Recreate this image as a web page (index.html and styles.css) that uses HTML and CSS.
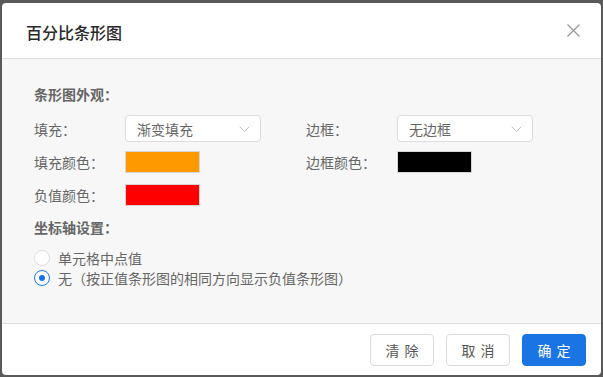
FILE: index.html
```html
<!DOCTYPE html>
<html lang="zh-CN">
<head>
  <meta charset="UTF-8">
  <title>百分比条形图</title>
  <link rel="stylesheet" href="styles.css">
</head>
<body>
  <div class="dialog">
    <div class="dialog-header">
      <div class="dialog-title">百分比条形图</div>
      <button class="close-btn" aria-label="关闭">
        <svg width="13" height="13" viewBox="0 0 13 13"><path d="M0.5 0.5 L12.5 12.5 M12.5 0.5 L0.5 12.5" stroke="#9a9a9a" stroke-width="1.3" fill="none"/></svg>
      </button>
    </div>

    <div class="dialog-body">
      <div class="section-title">条形图外观：</div>

      <div class="form-row">
        <div class="field">
          <span class="field-label">填充：</span>
          <div class="select">
            <span>渐变填充</span>
            <svg class="chevron" width="11" height="6" viewBox="0 0 11 6"><path d="M0.5 0.5 L5.5 5.5 L10.5 0.5" stroke="#c4c4c4" stroke-width="1" fill="none"/></svg>
          </div>
        </div>
        <div class="field">
          <span class="field-label">边框：</span>
          <div class="select">
            <span>无边框</span>
            <svg class="chevron" width="11" height="6" viewBox="0 0 11 6"><path d="M0.5 0.5 L5.5 5.5 L10.5 0.5" stroke="#c4c4c4" stroke-width="1" fill="none"/></svg>
          </div>
        </div>
      </div>

      <div class="form-row">
        <div class="field">
          <span class="field-label">填充颜色：</span>
          <div class="swatch swatch-orange"></div>
        </div>
        <div class="field">
          <span class="field-label">边框颜色：</span>
          <div class="swatch swatch-black"></div>
        </div>
      </div>

      <div class="form-row">
        <div class="field">
          <span class="field-label">负值颜色：</span>
          <div class="swatch swatch-red"></div>
        </div>
      </div>

      <div class="section-title axis-title">坐标轴设置：</div>

      <div class="radio-list">
        <label class="radio-row">
          <span class="radio"></span>
          <span>单元格中点值</span>
        </label>
        <label class="radio-row">
          <span class="radio checked"></span>
          <span>无（按正值条形图的相同方向显示负值条形图）</span>
        </label>
      </div>
    </div>

    <div class="dialog-footer">
      <button class="btn">清除</button>
      <button class="btn">取消</button>
      <button class="btn btn-primary">确定</button>
    </div>
  </div>
</body>
</html>
```

FILE: styles.css
```css
body {
  margin: 0;
  height: 377px;
  background-color: #595959;
  font-family: "Noto Sans CJK SC", "Noto Sans", sans-serif;
  font-size: 14px;
  color: #666;
  overflow: hidden;
}
.dialog {
  margin: 3px 2px 0 2px;
  height: 372px;
  background-color: #fff;
  border-radius: 4px;
  display: flex;
  flex-direction: column;
  overflow: hidden;
}
.dialog-header {
  height: 55px;
  display: flex;
  align-items: center;
  justify-content: space-between;
  padding: 0 21px 0 24px;
  border-bottom: 1px solid #dcdcdc;
}
.dialog-title {
  font-size: 16px;
  font-weight: 500;
  color: #2a2a2a;
  line-height: 20px;
  margin-top: 2px;
}
.close-btn {
  background: none;
  border: none;
  padding: 0;
  width: 13px;
  height: 13px;
  display: flex;
  cursor: pointer;
}
.dialog-body {
  flex: 1;
  background-color: #f7f7f7;
  padding: 25px 32px 0 32px;
  border-bottom: 1px solid #dcdcdc;
}
.section-title {
  font-weight: bold;
  line-height: 20px;
  color: #666;
  margin-bottom: 8px;
}
.axis-title {
  margin-top: 6px;
  margin-bottom: 11px;
}
.form-row {
  display: flex;
  height: 33px;
  align-items: center;
}
.field {
  width: 272px;
  flex-shrink: 0;
  display: flex;
  align-items: center;
}
.field-label {
  width: 91px;
  flex-shrink: 0;
  line-height: 20px;
}
.select {
  box-sizing: border-box;
  width: 136px;
  height: 27px;
  background-color: #fff;
  border: 1px solid #dcdcdc;
  border-radius: 4px;
  display: flex;
  align-items: center;
  justify-content: space-between;
  padding: 0 10px 0 11px;
  color: #666;
}
.swatch {
  box-sizing: border-box;
  width: 75px;
  height: 22px;
  border: 1px solid #d6d6d6;
}
.swatch-orange {
  background-color: #ff9900;
}
.swatch-black {
  background-color: #000;
}
.swatch-red {
  background-color: #ff0000;
}
.radio-list {
  display: flex;
  flex-direction: column;
}
.radio-row {
  display: flex;
  align-items: center;
  height: 20px;
  line-height: 20px;
}
.radio {
  box-sizing: border-box;
  width: 16px;
  height: 16px;
  border-radius: 50%;
  border: 1px solid #dcdcdc;
  background-color: #fff;
  margin-right: 8px;
  position: relative;
}
.radio.checked {
  border-color: #1a73e8;
}
.radio.checked::after {
  content: "";
  position: absolute;
  left: 4px;
  top: 4px;
  width: 6px;
  height: 6px;
  border-radius: 50%;
  background-color: #1a73e8;
}
.dialog-footer {
  height: 51px;
  display: flex;
  justify-content: flex-end;
  align-items: flex-start;
  gap: 12px;
  padding: 10px 15px 0 0;
  box-sizing: border-box;
}
.btn {
  box-sizing: border-box;
  width: 64px;
  height: 32px;
  border: 1px solid #dcdcdc;
  border-radius: 4px;
  background-color: #fff;
  color: #555;
  font-family: inherit;
  font-size: 14px;
  letter-spacing: 5px;
  padding: 0 0 0 5px;
  cursor: pointer;
}
.btn-primary {
  background-color: #1b74e4;
  border-color: #1b74e4;
  color: #fff;
}
```
